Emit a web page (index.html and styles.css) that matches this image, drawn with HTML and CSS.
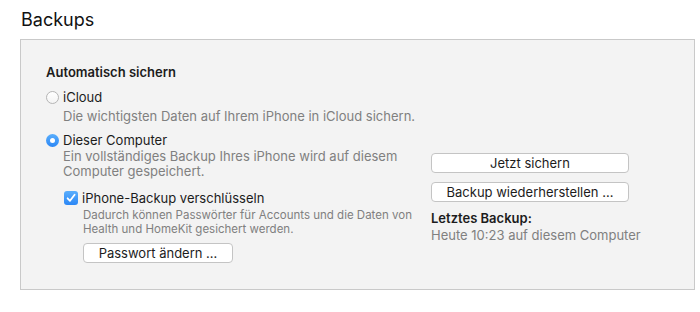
FILE: index.html
```html
<!DOCTYPE html>
<html lang="de">
<head>
<meta charset="utf-8">
<link rel="stylesheet" href="styles.css">
</head>
<body>
<div class="page">
  <h1 class="title">Backups</h1>
  <section class="box">
    <div class="heading">Automatisch sichern</div>
    <div class="option">
      <span class="radio"></span>
      <span class="label">iCloud</span>
    </div>
    <div class="desc desc-icloud">Die wichtigsten Daten auf Ihrem iPhone in iCloud sichern.</div>
    <div class="columns">
      <div class="left">
        <div class="option">
          <span class="radio radio-on"><span class="dot"></span></span>
          <span class="label">Dieser Computer</span>
        </div>
        <div class="desc desc-computer">Ein vollständiges Backup Ihres iPhone wird auf diesem Computer gespeichert.</div>
        <div class="sub">
          <div class="option">
            <span class="check">
              <svg width="10" height="10" viewBox="0 0 10 10"><path d="M1.6 5.3 L4 7.8 L8.6 1.8" fill="none" stroke="#fff" stroke-width="1.8" stroke-linecap="round" stroke-linejoin="round"/></svg>
            </span>
            <span class="label">iPhone-Backup verschlüsseln</span>
          </div>
          <div class="small">Dadurch können Passwörter für Accounts und die Daten von Health und HomeKit gesichert werden.</div>
          <button class="btn btn-pass">Passwort ändern …</button>
        </div>
      </div>
      <div class="right">
        <button class="btn">Jetzt sichern</button>
        <button class="btn">Backup wiederherstellen …</button>
        <div class="last-title">Letztes Backup:</div>
        <div class="last-value">Heute 10:23 auf diesem Computer</div>
      </div>
    </div>
  </section>
</div>
</body>
</html>
```

FILE: styles.css
```css
html, body {
  margin: 0;
  padding: 0;
  background: #ffffff;
}
body {
  font-family: Inter, "Liberation Sans", Arial, sans-serif;
  font-size: 13px;
  color: #1c1c1c;
}
.page {
  padding: 9px 6px 0 20px;
}
.title {
  margin: 0 0 8px 1px;
  font-size: 18px;
  line-height: 22px;
  font-weight: normal;
  color: #111;
}
.box {
  box-sizing: border-box;
  width: 675px;
  height: 251px;
  border: 1px solid #c9c9c9;
  background: #f3f3f3;
  padding: 24px 0 0 25px;
}
.heading {
  font-weight: 600;
  line-height: 16px;
  margin-bottom: 9px;
}
.option {
  display: flex;
  align-items: center;
  gap: 4px;
  line-height: 16px;
}
.radio {
  box-sizing: border-box;
  width: 13px;
  height: 13px;
  border-radius: 50%;
  border: 1px solid #b5b5b5;
  background: linear-gradient(#ffffff, #f4f4f4);
  display: flex;
  align-items: center;
  justify-content: center;
}
.radio-on {
  border: none;
  background: linear-gradient(#5aaefc, #2b87f5);
}
.dot {
  width: 5px;
  height: 5px;
  border-radius: 50%;
  background: #fff;
}
.desc {
  color: #808080;
  padding-left: 17px;
}
.desc-icloud {
  line-height: 16px;
  margin-top: 3px;
  margin-bottom: 8px;
}
.desc-computer {
  line-height: 15px;
  margin-top: 1px;
  width: 355px;
}
.columns {
  display: grid;
  grid-template-columns: 385px 198px;
}
.sub {
  padding-left: 18px;
  margin-top: 11px;
}
.check {
  box-sizing: border-box;
  width: 14px;
  height: 14px;
  border-radius: 3px;
  background: linear-gradient(#5aaefc, #2b87f5);
  display: flex;
  align-items: center;
  justify-content: center;
}
.small {
  font-size: 11.5px;
  line-height: 14px;
  color: #808080;
  padding-left: 19px;
  margin-top: 2px;
  width: 340px;
}
.btn {
  display: block;
  box-sizing: border-box;
  height: 20px;
  width: 198px;
  padding: 0;
  border: 1px solid #c4c4c4;
  border-radius: 4px;
  background: #fff;
  font-family: inherit;
  font-size: 13px;
  color: #1c1c1c;
  line-height: 18px;
  text-align: center;
}
.btn-pass {
  width: 150px;
  margin: 7px 0 0 19px;
}
.right {
  padding-top: 21px;
}
.right .btn + .btn {
  margin-top: 9px;
}
.last-title {
  font-weight: 600;
  line-height: 16px;
  margin-top: 8px;
}
.last-value {
  color: #808080;
  line-height: 16px;
  margin-top: 1px;
  white-space: nowrap;
}
```
